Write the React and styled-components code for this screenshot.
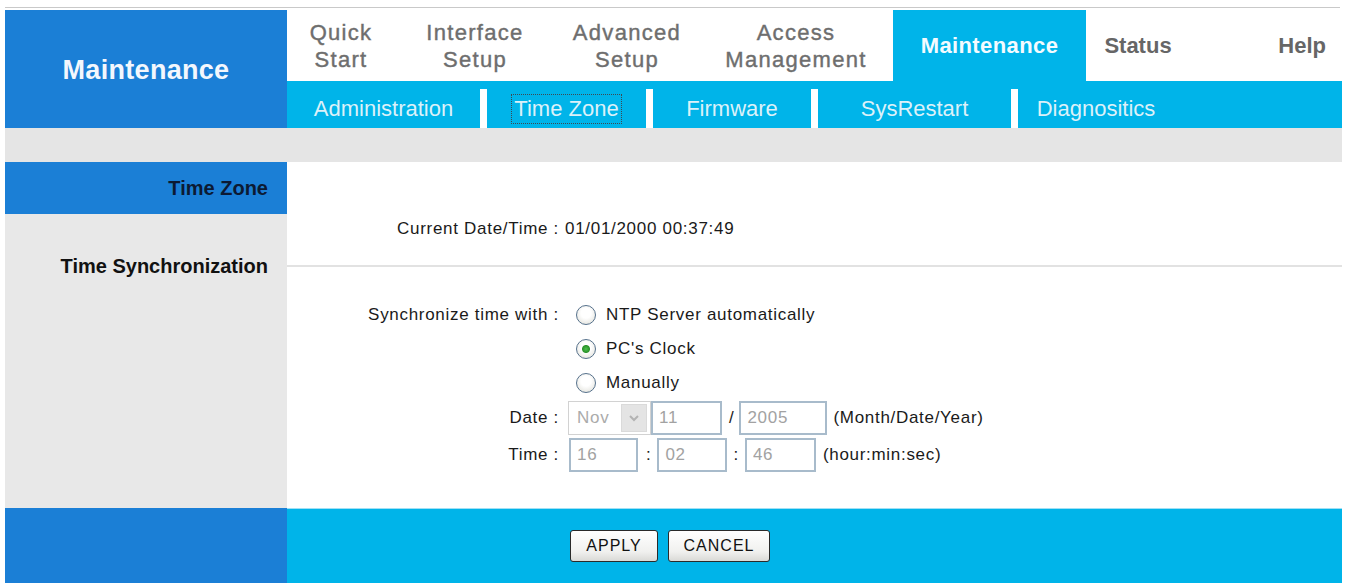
import React from "react";
import styled, { createGlobalStyle } from "styled-components";

const BLUE = "#1b7fd6";
const CYAN = "#00b4e9";

const GlobalStyle = createGlobalStyle`
  html, body {
    margin: 0;
    padding: 0;
    background: #fff;
  }
  body {
    font-family: "Liberation Sans", Arial, sans-serif;
    color: #1a1a1a;
  }
`;

const tabs = [
  { id: "quick", lines: ["Quick", "Start"], width: 108 },
  { id: "iface", lines: ["Interface", "Setup"], width: 160 },
  { id: "adv", lines: ["Advanced", "Setup"], width: 144 },
  { id: "access", lines: ["Access", "Management"], width: 194 },
  { id: "maint", lines: ["Maintenance"], width: 193, active: true },
  { id: "status", lines: ["Status"], width: 104, dark: true },
  { id: "help", lines: ["Help"], width: 152, dark: true, right: true },
];

const subTabs = [
  { id: "admin", label: "Administration", width: 193 },
  { id: "tz", label: "Time Zone", width: 166, sep: true, current: true },
  { id: "fw", label: "Firmware", width: 165, sep: true },
  { id: "restart", label: "SysRestart", width: 200, sep: true },
  { id: "diag", label: "Diagnositics", width: 163, sep: true },
];

const Page = styled.div`
  width: 1337px;
  padding: 7px 0 0 5px;
`;

const TopRule = styled.div`
  width: 1335px;
  height: 1px;
  margin-bottom: 2px;
  background: #c9c9c9;
`;

const Header = styled.header`
  display: grid;
  grid-template-columns: 282px 1fr;
  height: 118px;
`;

const Brand = styled.div`
  display: flex;
  align-items: center;
  justify-content: center;
  padding-top: 2px;
  background: ${BLUE};
  color: #f3f7fd;
  font-size: 27px;
  font-weight: 700;
  letter-spacing: 0.3px;
`;

const NavArea = styled.div`
  display: flex;
  flex-direction: column;
`;

const MainNav = styled.nav`
  display: flex;
  height: 71px;
`;

const Tab = styled.div`
  box-sizing: border-box;
  width: ${(p) => p.$w}px;
  display: flex;
  flex-direction: column;
  align-items: ${(p) => (p.$right ? "flex-end" : "center")};
  justify-content: center;
  padding: ${(p) => (p.$right ? "0 16px 0 0" : "0")};
  text-align: center;
  font-size: 22px;
  font-weight: ${(p) => (p.$active || p.$dark ? 700 : 400)};
  line-height: 27px;
  letter-spacing: ${(p) => (p.$active ? "0.4px" : p.$dark ? "0" : "1.3px")};
  color: ${(p) => (p.$active ? "#f4fbff" : p.$dark ? "#666" : "#6e6e6e")};
  background: ${(p) => (p.$active ? CYAN : "#fff")};
  -webkit-text-stroke: ${(p) => (p.$active || p.$dark ? "0" : "0.4px")};
`;

const SubNav = styled.div`
  display: flex;
  box-sizing: border-box;
  height: 47px;
  padding-top: 8px;
  background: ${CYAN};
`;

const SubItem = styled.div`
  box-sizing: border-box;
  width: ${(p) => p.$w}px;
  display: flex;
  align-items: center;
  justify-content: center;
  border-left: ${(p) => (p.$sep ? "7px solid #fff" : "0")};
  font-size: 22px;
  color: #dcf1f9;
`;

const SubFill = styled.div`
  flex: 1;
`;

const Focused = styled.span`
  outline: 1px dotted #3d4a52;
  outline-offset: 1px;
  padding: 0 1px;
`;

const GreyBand = styled.div`
  height: 34px;
  background: #e5e5e5;
`;

const Body = styled.main`
  display: grid;
  grid-template-columns: 282px 1fr;
`;

const SideHead = styled.div`
  height: 52px;
  display: flex;
  align-items: center;
  justify-content: flex-end;
  padding-right: 19px;
  background: ${BLUE};
  color: #0c1a33;
  font-size: 20px;
  font-weight: 700;
`;

const SideCell = styled.div`
  display: flex;
  align-items: center;
  justify-content: flex-end;
  padding-right: 19px;
  background: #e8e8e8;
  color: #111;
  font-size: 20px;
  font-weight: 700;
`;

const Blank = styled.div`
  background: #fff;
`;

const DividerCell = styled.div`
  height: 44px;
  display: flex;
  align-items: center;
`;

const Line = styled.div`
  flex: 1;
  height: 2px;
  background: #e2e2e2;
`;

const Form = styled.div`
  padding: 10px 0 34px;
`;

const FieldRow = styled.div`
  display: grid;
  grid-template-columns: 272px 1fr;
  align-items: center;
  height: ${(p) => p.$h}px;
  font-size: 17px;
  letter-spacing: 0.7px;
`;

const Label = styled.div`
  text-align: right;
  color: #1a1a1a;
`;

const Value = styled.div`
  display: flex;
  align-items: center;
  padding-left: 6px;
  color: #1a1a1a;
`;

const Radio = styled.input.attrs({ type: "radio" })`
  appearance: none;
  flex: none;
  box-sizing: border-box;
  width: 20px;
  height: 20px;
  margin: 0 10px 0 11px;
  border-radius: 50%;
  border: 1px solid #56718c;
  background: radial-gradient(circle at 50% 40%, #fff 35%, #dcdcd4 100%);

  &:checked {
    background: radial-gradient(circle, #4cc24c 0, #2a922a 3.5px, transparent 4.5px),
      radial-gradient(circle at 50% 40%, #fff 35%, #dcdcd4 100%);
  }
`;

const RadioLabel = styled.label`
  display: flex;
  align-items: center;
`;

const SelectBox = styled.div`
  box-sizing: border-box;
  width: 83px;
  height: 34px;
  margin-left: 3px;
  display: flex;
  align-items: center;
  justify-content: space-between;
  padding: 0 3px 0 8px;
  border: 1px solid #d2d2d2;
  color: #ababab;
`;

const SelectArrow = styled.span`
  box-sizing: border-box;
  width: 26px;
  height: 28px;
  display: flex;
  align-items: center;
  justify-content: center;
  background: #e4e4e4;
  border: 1px solid #dadada;
`;

const TextBox = styled.input`
  box-sizing: border-box;
  width: ${(p) => p.$w}px;
  height: 34px;
  margin: 0 0 0 ${(p) => p.$ml || 0}px;
  padding: 0 6px;
  border: 2px solid #a8bbcb;
  background: #fff;
  font-family: "Liberation Sans", Arial, sans-serif;
  font-size: 17px;
  letter-spacing: 0.7px;
  color: #a2a2a2;
  outline: none;
`;

const Sep = styled.span`
  margin: 0 ${(p) => p.$mr}px 0 ${(p) => p.$ml}px;
`;

const Hint = styled.span`
  margin-left: ${(p) => p.$ml}px;
`;

const Footer = styled.footer`
  display: grid;
  grid-template-columns: 282px 1fr;
  height: 75px;
`;

const FootSide = styled.div`
  background: ${BLUE};
`;

const FootMain = styled.div`
  display: grid;
  grid-template-columns: 272px 1fr;
  align-items: center;
  background: ${CYAN};
  border-top: 1px solid #9fe0f5;
`;

const Buttons = styled.div`
  display: flex;
  gap: 10px;
  padding-left: 11px;
`;

const Button = styled.button`
  box-sizing: border-box;
  width: ${(p) => p.$w}px;
  height: 32px;
  padding: 0;
  border: 1px solid #2a2a2a;
  border-radius: 3px;
  background: linear-gradient(#ffffff, #f0f0ee 70%, #d9d9d6);
  font-family: "Liberation Sans", Arial, sans-serif;
  font-size: 16px;
  letter-spacing: 1px;
  color: #111;
  cursor: pointer;
`;

function Chevron() {
  return (
    <svg width="12" height="10" viewBox="0 0 12 10">
      <polyline points="2,3 6,7 10,3" fill="none" stroke="#b3b3b3" strokeWidth="2" />
    </svg>
  );
}

export default function App() {
  return (
    <>
      <GlobalStyle />
      <Page>
        <TopRule />
        <Header>
          <Brand>Maintenance</Brand>
          <NavArea>
            <MainNav>
              {tabs.map((t) => (
                <Tab key={t.id} $w={t.width} $active={t.active} $dark={t.dark} $right={t.right}>
                  {t.lines.map((l) => (
                    <span key={l}>{l}</span>
                  ))}
                </Tab>
              ))}
            </MainNav>
            <SubNav>
              {subTabs.map((s) => (
                <SubItem key={s.id} $w={s.width} $sep={s.sep}>
                  {s.current ? <Focused>{s.label}</Focused> : s.label}
                </SubItem>
              ))}
              <SubFill />
            </SubNav>
          </NavArea>
        </Header>

        <GreyBand />

        <Body>
          <SideHead>Time Zone</SideHead>
          <Blank />

          <SideCell />
          <FieldRow $h={30}>
            <Label>Current Date/Time :</Label>
            <Value>01/01/2000 00:37:49</Value>
          </FieldRow>

          <SideCell>Time Synchronization</SideCell>
          <DividerCell>
            <Line />
          </DividerCell>

          <SideCell />
          <Form>
            <FieldRow $h={34}>
              <Label>Synchronize time with :</Label>
              <Value>
                <RadioLabel>
                  <Radio name="sync" />
                  NTP Server automatically
                </RadioLabel>
              </Value>
            </FieldRow>
            <FieldRow $h={34}>
              <Label />
              <Value>
                <RadioLabel>
                  <Radio name="sync" defaultChecked />
                  PC's Clock
                </RadioLabel>
              </Value>
            </FieldRow>
            <FieldRow $h={34}>
              <Label />
              <Value>
                <RadioLabel>
                  <Radio name="sync" />
                  Manually
                </RadioLabel>
              </Value>
            </FieldRow>
            <FieldRow $h={36}>
              <Label>Date :</Label>
              <Value>
                <SelectBox>
                  Nov
                  <SelectArrow>
                    <Chevron />
                  </SelectArrow>
                </SelectBox>
                <TextBox $w={71} defaultValue="11" readOnly />
                <Sep $ml={7} $mr={5}>/</Sep>
                <TextBox $w={88} defaultValue="2005" readOnly />
                <Hint $ml={6}>(Month/Date/Year)</Hint>
              </Value>
            </FieldRow>
            <FieldRow $h={38}>
              <Label>Time :</Label>
              <Value>
                <TextBox $w={69} $ml={4} defaultValue="16" readOnly />
                <Sep $ml={8} $mr={6}>:</Sep>
                <TextBox $w={70} defaultValue="02" readOnly />
                <Sep $ml={6} $mr={6}>:</Sep>
                <TextBox $w={71} defaultValue="46" readOnly />
                <Hint $ml={7}>(hour:min:sec)</Hint>
              </Value>
            </FieldRow>
          </Form>
        </Body>

        <Footer>
          <FootSide />
          <FootMain>
            <span />
            <Buttons>
              <Button $w={88}>APPLY</Button>
              <Button $w={102}>CANCEL</Button>
            </Buttons>
          </FootMain>
        </Footer>
      </Page>
    </>
  );
}
